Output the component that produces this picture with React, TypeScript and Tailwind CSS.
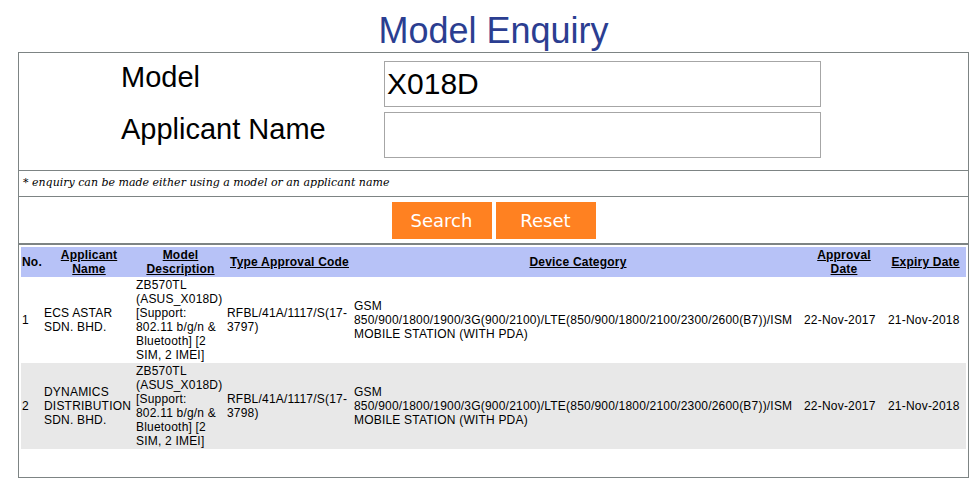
import React from 'react';

interface Approval {
  no: number;
  applicant: string;
  model: string;
  code: string;
  category: string;
  approved: string;
  expiry: string;
}

const rows: Approval[] = [
  {
    no: 1,
    applicant: 'ECS ASTAR SDN. BHD.',
    model: 'ZB570TL (ASUS_X018D) [Support: 802.11 b/g/n & Bluetooth] [2 SIM, 2 IMEI]',
    code: 'RFBL/41A/1117/S(17-3797)',
    category: 'GSM 850/900/1800/1900/3G(900/2100)/LTE(850/900/1800/2100/2300/2600(B7))/ISM MOBILE STATION (WITH PDA)',
    approved: '22-Nov-2017',
    expiry: '21-Nov-2018',
  },
  {
    no: 2,
    applicant: 'DYNAMICS DISTRIBUTION SDN. BHD.',
    model: 'ZB570TL (ASUS_X018D) [Support: 802.11 b/g/n & Bluetooth] [2 SIM, 2 IMEI]',
    code: 'RFBL/41A/1117/S(17-3798)',
    category: 'GSM 850/900/1800/1900/3G(900/2100)/LTE(850/900/1800/2100/2300/2600(B7))/ISM MOBILE STATION (WITH PDA)',
    approved: '22-Nov-2017',
    expiry: '21-Nov-2018',
  },
];

const th = 'px-[1px] py-[1px] font-bold align-middle';
const td = 'px-[1px] py-[1px] align-middle';

export default function App() {
  return (
    <div className="min-h-[484px] bg-white font-['Liberation_Sans',Arial,sans-serif] text-black">
      <div className="ml-[18px] w-[951px]">
        <h1 className="mt-[11px] mb-[1px] text-center text-[36px] leading-[40px] font-normal text-[#2b3e91]">
          Model Enquiry
        </h1>

        <div className="border border-[#7d8484]">
          {/* search fields */}
          <div className="pt-[8px] pb-[12px] border-b border-[#7d8484]">
            <div className="flex items-start pl-[102px]">
              <label className="w-[263px] text-[29px] leading-[33px]">Model</label>
              <input
                className="w-[437px] h-[46px] border border-[#a6a6a6] px-[2px] text-[30px] outline-none"
                defaultValue="X018D"
              />
            </div>
            <div className="flex items-start pl-[102px] mt-[5px]">
              <label className="w-[263px] text-[29px] leading-[33px] mt-[1px]">Applicant Name</label>
              <input className="w-[437px] h-[46px] border border-[#a6a6a6] px-[2px] text-[30px] outline-none" />
            </div>
          </div>

          <div className="h-[26px] flex items-center px-[4px] border-b border-[#7d8484] font-['DejaVu_Serif',Georgia,serif] italic text-[11px]">
            * enquiry can be made either using a model or an applicant name
          </div>

          <div className="flex justify-center gap-[4px] pt-[5px] pb-[4px] border-b-2 border-[#7d8484]">
            <button className="w-[100px] h-[37px] bg-[#ff8121] text-white text-[18px] font-['DejaVu_Sans',Verdana,sans-serif]">
              Search
            </button>
            <button className="w-[100px] h-[37px] bg-[#ff8121] text-white text-[18px] font-['DejaVu_Sans',Verdana,sans-serif]">
              Reset
            </button>
          </div>

          <div className="p-[2px] pb-[28px]">
            <table className="w-[945px] table-fixed border-collapse text-[12px] leading-[14px] tracking-[0.2px]">
              <colgroup>
                <col className="w-[22px]" />
                <col className="w-[92px]" />
                <col className="w-[91px]" />
                <col className="w-[127px]" />
                <col className="w-[450px]" />
                <col className="w-[82px]" />
                <col className="w-[81px]" />
              </colgroup>
              <thead>
                <tr className="bg-[#b7c2f7]">
                  <th className={`${th} text-left`}>No.</th>
                  <th className={`${th} text-center underline`}>Applicant Name</th>
                  <th className={`${th} text-center underline`}>Model Description</th>
                  <th className={`${th} text-center underline`}>Type Approval Code</th>
                  <th className={`${th} text-center underline`}>Device Category</th>
                  <th className={`${th} text-center underline`}>Approval Date</th>
                  <th className={`${th} text-center underline`}>Expiry Date</th>
                </tr>
              </thead>
              <tbody>
                {rows.map((r, i) => (
                  <tr key={r.no} className={i % 2 === 1 ? 'bg-[#e8e8e8]' : 'bg-white'}>
                    <td className={td}>{r.no}</td>
                    <td className={td}>{r.applicant}</td>
                    <td className={td}>{r.model}</td>
                    <td className={td}>{r.code}</td>
                    <td className={td}>{r.category}</td>
                    <td className={td}>{r.approved}</td>
                    <td className={`${td} pl-[3px]`}>{r.expiry}</td>
                  </tr>
                ))}
              </tbody>
            </table>
          </div>
        </div>
      </div>
    </div>
  );
}
